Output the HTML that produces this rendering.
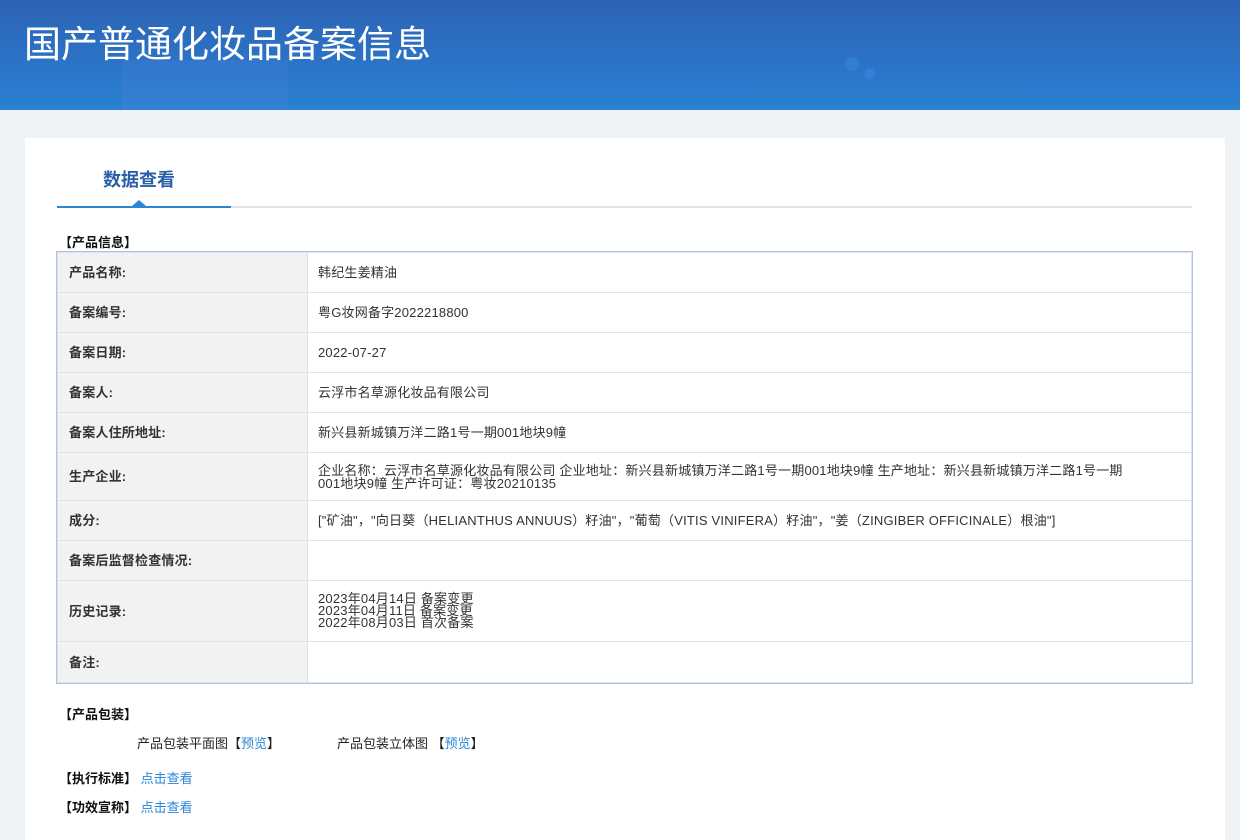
<!DOCTYPE html>
<html><head><meta charset="utf-8"><style>
*{margin:0;padding:0;box-sizing:border-box}
body{width:1240px;height:840px;overflow:hidden;background:#eff3f6;font-family:"Liberation Sans","Noto Sans CJK SC",sans-serif;color:#333;font-size:13px;position:relative}
.hd{position:absolute;left:0;top:0;width:1240px;height:110px;background:linear-gradient(180deg,#2d63b4 0%,#2b74c8 60%,#2a80d2 100%);overflow:hidden}
.hd .b1{position:absolute;left:122px;top:60px;width:166px;height:60px;background:rgba(90,140,230,.18)}
.hd .c1{position:absolute;left:845px;top:57px;width:14px;height:14px;border-radius:50%;background:rgba(60,140,230,.45)}
.hd .c2{position:absolute;left:864px;top:68px;width:11px;height:11px;border-radius:50%;background:rgba(60,140,230,.45)}
.hd h1{position:absolute;left:24px;top:14px;font-size:37px;font-weight:normal;color:#fff;font-family:"Liberation Sans","Noto Sans CJK SC",sans-serif}
.card{position:absolute;left:25px;top:138px;width:1200px;height:702px;background:#fff}
.tab{position:absolute;left:78px;top:28px;font-size:18px;font-weight:bold;color:#2a5ea6}
.line{position:absolute;left:32px;top:68px;width:1135px;height:2px;background:#e4e4e4}
.line i{position:absolute;left:0;top:0;width:174px;height:2px;background:#2a87d6}
.tri{position:absolute;left:107px;top:62px;width:0;height:0;border-left:7px solid transparent;border-right:7px solid transparent;border-bottom:6px solid #2a87d6}
.sec{position:absolute;font-weight:bold;color:#111;font-size:13px}
table{position:absolute;left:32px;top:114px;width:1135px;border-collapse:collapse;outline:1px solid #a9c4e6;letter-spacing:0.2px}
td{border:1px solid #e2e2e2;vertical-align:middle;line-height:13px}
td.l{width:250px;background:#f2f2f2;font-weight:bold;padding-left:11px;color:#333}
td.v{padding-left:10px;padding-right:50px}
a{color:#2a87d6;text-decoration:none}
.t{position:absolute;color:#222}
</style></head><body>
<div class="hd"><div class="b1"></div><div class="c1"></div><div class="c2"></div><h1>国产普通化妆品备案信息</h1></div>
<div class="card">
<div class="tab">数据查看</div>
<div class="line"><i></i></div><div class="tri"></div>
<div class="sec" style="left:34px;top:94px">【产品信息】</div>
<table>
<tr style="height:40px"><td class="l">产品名称:</td><td class="v">韩纪生姜精油</td></tr>
<tr style="height:40px"><td class="l">备案编号:</td><td class="v">粤G妆网备字2022218800</td></tr>
<tr style="height:40px"><td class="l">备案日期:</td><td class="v">2022-07-27</td></tr>
<tr style="height:40px"><td class="l">备案人:</td><td class="v">云浮市名草源化妆品有限公司</td></tr>
<tr style="height:40px"><td class="l">备案人住所地址:</td><td class="v">新兴县新城镇万洋二路1号一期001地块9幢</td></tr>
<tr style="height:48px"><td class="l">生产企业:</td><td class="v">企业名称：云浮市名草源化妆品有限公司 企业地址：新兴县新城镇万洋二路1号一期001地块9幢 生产地址：新兴县新城镇万洋二路1号一期001地块9幢 生产许可证：粤妆20210135</td></tr>
<tr style="height:40px"><td class="l">成分:</td><td class="v">["矿油"，"向日葵（HELIANTHUS ANNUUS）籽油"，"葡萄（VITIS VINIFERA）籽油"，"姜（ZINGIBER OFFICINALE）根油"]</td></tr>
<tr style="height:40px"><td class="l">备案后监督检查情况:</td><td class="v"></td></tr>
<tr style="height:61px"><td class="l">历史记录:</td><td class="v" style="line-height:12px">2023年04月14日 备案变更<br>2023年04月11日 备案变更<br>2022年08月03日 首次备案</td></tr>
<tr style="height:41px"><td class="l">备注:</td><td class="v"></td></tr>
</table>
<div class="sec" style="left:34px;top:566px">【产品包装】</div>
<div class="t" style="left:112px;top:595px">产品包装平面图【<a>预览</a>】</div>
<div class="t" style="left:312px;top:595px">产品包装立体图 【<a>预览</a>】</div>
<div class="sec" style="left:34px;top:630px">【执行标准】 <a style="font-weight:normal">点击查看</a></div>
<div class="sec" style="left:34px;top:659px">【功效宣称】 <a style="font-weight:normal">点击查看</a></div>
</div>
</body></html>
